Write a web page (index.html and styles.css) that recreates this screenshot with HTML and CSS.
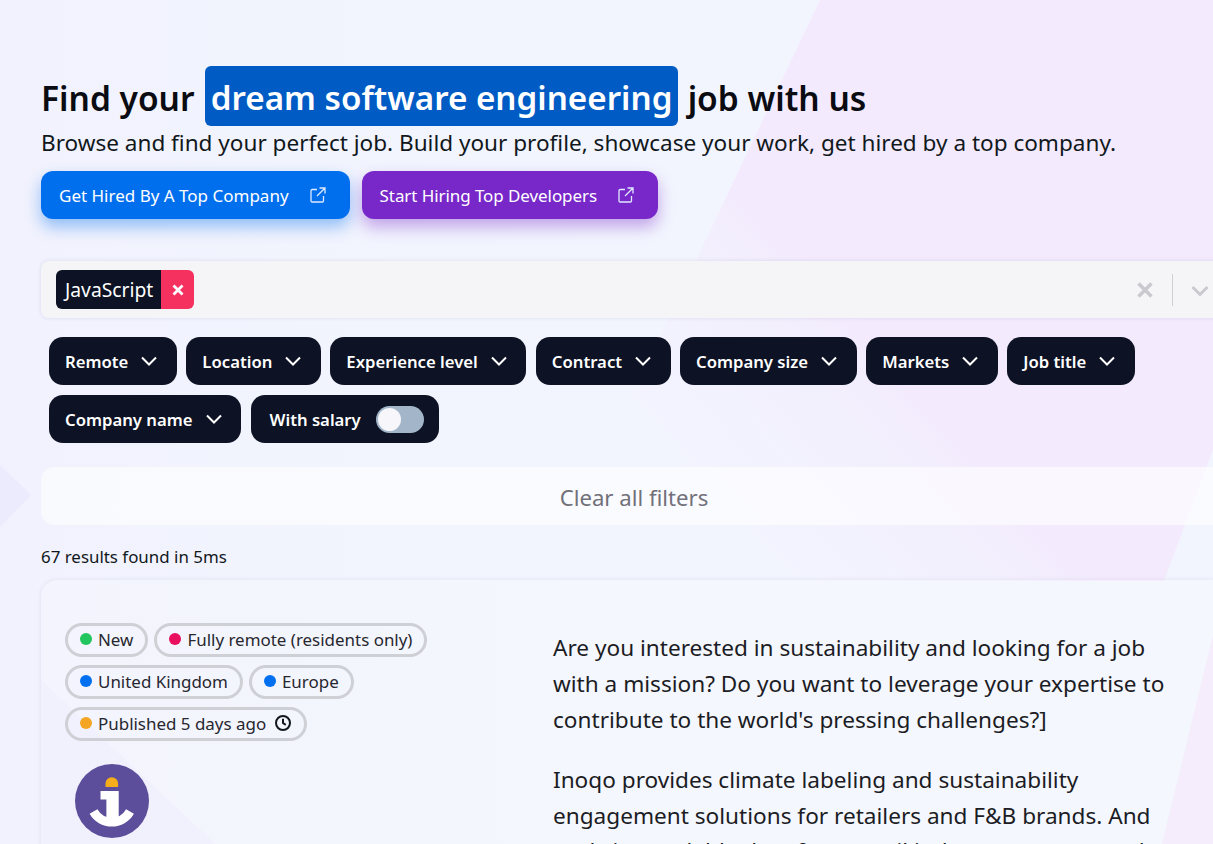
FILE: index.html
```html
<!DOCTYPE html>
<html lang="en">
<head>
    <meta charset="UTF-8">
    <meta name="viewport" content="width=device-width, initial-scale=1.0">
    <title>Find your dream software engineering job</title>
    <link rel="stylesheet" href="styles.css">
</head>
<body>

    <!-- faint shapes behind the page -->
    <svg class="backdrop" width="1213" height="844" viewBox="0 0 1213 844" aria-hidden="true">
        <defs>
            <linearGradient id="base" x1="0" y1="0" x2="1" y2="0">
                <stop offset="0" stop-color="#f1f2fd"/>
                <stop offset="0.5" stop-color="#f2f5fe"/>
                <stop offset="1" stop-color="#f2f5fe"/>
            </linearGradient>
            <linearGradient id="wash" gradientUnits="userSpaceOnUse" x1="650" y1="480" x2="850" y2="300">
                <stop offset="0" stop-color="#f3eafd" stop-opacity="0"/>
                <stop offset="0.75" stop-color="#f3eafd" stop-opacity="0.55"/>
                <stop offset="1" stop-color="#f3eafd"/>
            </linearGradient>
        </defs>
        <rect width="1213" height="844" fill="url(#base)"/>
        <polygon points="820,0 1213,0 1213,450 1164,581 560,581 620,420" fill="url(#wash)"/>
        <polygon points="0,465 31,495 0,527" fill="#ecebfd"/>
        <polygon points="41,680 215,844 41,844" fill="#eeedfd"/>
        <polygon points="1213,635 1162,844 1213,844" fill="#f3e9fc"/>
    </svg>

    <div class="container">
        <h1>Find your <span class="highlight">dream software engineering</span> job with us</h1>
        <p class="lead">Browse and find your perfect job. Build your profile, showcase your work, get hired by a top company.</p>

        <div class="cta-row">
            <a class="cta cta-blue" href="#">Get Hired By A Top Company
                <svg class="ext" width="18" height="18" viewBox="0 0 18 18"><path d="M8 3.500H3.200A1.200 1.200 0 0 0 2 4.700v10.100A1.200 1.200 0 0 0 3.200 16h10.100a1.200 1.200 0 0 0 1.200-1.200V10M10.500 2H16v5.500M16 2L8 10"/></svg>
            </a>
            <a class="cta cta-purple" href="#">Start Hiring Top Developers
                <svg class="ext" width="18" height="18" viewBox="0 0 18 18"><path d="M8 3.500H3.200A1.200 1.200 0 0 0 2 4.700v10.100A1.200 1.200 0 0 0 3.200 16h10.100a1.200 1.200 0 0 0 1.200-1.200V10M10.500 2H16v5.500M16 2L8 10"/></svg>
            </a>
        </div>

        <div class="search-bar">
            <div class="pill">
                <span class="pill-label">JavaScript</span>
                <span class="pill-remove"><svg width="12" height="12" viewBox="0 0 12 12"><path d="M1.500 1.500l9 9M10.500 1.500l-9 9"/></svg></span>
            </div>
            <div class="search-controls">
                <svg class="clear-x" width="20" height="20" viewBox="0 0 20 20"><path d="M3.500 3.500l13 13M16.500 3.500l-13 13"/></svg>
                <span class="divider"></span>
                <svg class="bar-chevron" width="20" height="20" viewBox="0 0 20 20"><path d="M2.500 7l7.500 7.500L17.500 7"/></svg>
            </div>
        </div>

        <div class="filters">
            <button class="filter">Remote <svg class="chev" width="18" height="18" viewBox="0 0 18 18"><path d="M2 5.500l7 7 7-7"/></svg></button>
            <button class="filter">Location <svg class="chev" width="18" height="18" viewBox="0 0 18 18"><path d="M2 5.500l7 7 7-7"/></svg></button>
            <button class="filter">Experience level <svg class="chev" width="18" height="18" viewBox="0 0 18 18"><path d="M2 5.500l7 7 7-7"/></svg></button>
            <button class="filter">Contract <svg class="chev" width="18" height="18" viewBox="0 0 18 18"><path d="M2 5.500l7 7 7-7"/></svg></button>
            <button class="filter">Company size <svg class="chev" width="18" height="18" viewBox="0 0 18 18"><path d="M2 5.500l7 7 7-7"/></svg></button>
            <button class="filter">Markets <svg class="chev" width="18" height="18" viewBox="0 0 18 18"><path d="M2 5.500l7 7 7-7"/></svg></button>
            <button class="filter">Job title <svg class="chev" width="18" height="18" viewBox="0 0 18 18"><path d="M2 5.500l7 7 7-7"/></svg></button>
            <button class="filter">Company name <svg class="chev" width="18" height="18" viewBox="0 0 18 18"><path d="M2 5.500l7 7 7-7"/></svg></button>
            <button class="filter filter-salary">With salary <span class="toggle"><span class="knob"></span></span></button>
        </div>

        <button class="clear-all">Clear all filters</button>

        <p class="count">67 results found in 5ms</p>

        <div class="job-card">
            <div class="job-side">
                <div class="tags">
                    <span class="tag"><i class="dot dot-green"></i>New</span>
                    <span class="tag"><i class="dot dot-pink"></i>Fully remote (residents only)</span>
                    <span class="tag"><i class="dot dot-blue"></i>United Kingdom</span>
                    <span class="tag"><i class="dot dot-blue"></i>Europe</span>
                    <span class="tag"><i class="dot dot-orange"></i>Published 5 days ago
                        <svg class="clock" width="18" height="18" viewBox="0 0 18 18"><circle cx="9" cy="9" r="7"/><path d="M9 4.800V9l2.800 1.800"/></svg>
                    </span>
                </div>
                <svg class="logo" width="74" height="74" viewBox="0 0 74 74">
                    <circle cx="37" cy="37" r="37" fill="#5c4e9b"/>
                    <path d="M30.500 23v-3.500a6.300 6.300 0 0 1 12.600 0v3.500z" fill="#f6ad1b"/>
                    <path d="M25.500 27H43.700V54H31.400V35.500H25.500z" fill="#fff"/>
                    <path d="M18.500 47.500A21 21 0 0 0 55 47.500" fill="none" stroke="#fff" stroke-width="9"/>
                </svg>
            </div>
            <div class="job-text">
                <p>Are you interested in sustainability and looking for a job with a mission? Do you want to leverage your expertise to contribute to the world's pressing challenges?]</p>
                <p>Inoqo provides climate labeling and sustainability engagement solutions for retailers and F&amp;B brands. And we bring scalable data from retail industry partners and</p>
            </div>
        </div>
    </div>

</body>
</html>
```

FILE: styles.css
```css
html, body {
    height: 844px;
    overflow: hidden;
}

body {
    margin: 0;
    background-color: #f2f4fe;
    color: #11181c;
    font-family: "Noto Sans", sans-serif;
}

.backdrop {
    position: absolute;
    top: 0;
    left: 0;
    z-index: -1;
}

.container {
    width: 1186px;
    margin-left: 41px;
    padding-top: 66px;
}

h1 {
    height: 60px;
    margin: 0;
    font-size: 33.500px;
    font-weight: 600;
    line-height: 64px;
    color: #0b0b12;
}

.highlight {
    display: inline-block;
    height: 60px;
    padding: 0 5.500px;
    margin: 0 1px 0 2px;
    background-color: #005bc4;
    color: #fff;
    border-radius: 6px;
    font-size: 33.200px;
    vertical-align: top;
}

.lead {
    margin: 0;
    font-size: 22.560px;
    line-height: 34px;
}

.cta-row {
    display: flex;
    gap: 12px;
    margin-top: 11px;
}

.cta {
    display: flex;
    align-items: center;
    gap: 20px;
    height: 48px;
    padding: 0 23px 0 18px;
    border-radius: 12px;
    color: #fff;
    font-size: 17px;
    text-decoration: none;
}

.cta-blue {
    background-color: #006fee;
    box-shadow: 0 8px 16px rgba(0, 111, 238, 0.4);
}

.cta-purple {
    background-color: #7828c8;
    box-shadow: 0 8px 16px rgba(120, 40, 200, 0.4);
    letter-spacing: -0.08px;
}

.ext {
    fill: none;
    stroke: #dfe9ff;
    stroke-width: 1.300;
}

.search-bar {
    display: flex;
    align-items: center;
    justify-content: space-between;
    height: 57px;
    margin-top: 42px;
    padding: 0 8px 0 15px;
    box-sizing: border-box;
    background-color: #f5f5f8;
    border-radius: 8px;
    box-shadow: 0 0 4px rgba(60, 60, 120, 0.12);
}

.pill {
    display: flex;
    height: 39px;
    font-size: 19.300px;
    border-radius: 6px;
    overflow: hidden;
}

.pill-label {
    display: flex;
    align-items: center;
    width: 96px;
    padding-left: 9px;
    background-color: #0d1224;
    color: #fff;
}

.pill-remove {
    display: flex;
    align-items: center;
    justify-content: center;
    width: 33px;
    background-color: #f5325f;
}

.pill-remove path {
    fill: none;
    stroke: #fff;
    stroke-width: 2.800;
}

.search-controls {
    display: flex;
    align-items: center;
    margin-right: 9px;
}

.clear-x path {
    fill: none;
    stroke: #c9c9cf;
    stroke-width: 3.500;
}

.divider {
    width: 1px;
    height: 32px;
    margin: 0 17px;
    background-color: #cfcfd4;
}

.bar-chevron path {
    fill: none;
    stroke: #c9c9cf;
    stroke-width: 3;
}

.filters {
    display: flex;
    flex-wrap: wrap;
    gap: 10px 9.500px;
    margin-top: 19px;
    padding-left: 8px;
}

.filter {
    display: flex;
    align-items: center;
    gap: 12px;
    height: 48px;
    padding: 0 18.500px 0 16px;
    border: none;
    border-radius: 14px;
    background-color: #0d1224;
    color: #fff;
    font-family: inherit;
    font-size: 16.700px;
    font-weight: 600;
}

.chev {
    fill: none;
    stroke: #fff;
    stroke-width: 2;
}

.filter-salary {
    gap: 15px;
    padding: 0 15px 0 19px;
}

.toggle {
    display: block;
    width: 48px;
    height: 27px;
    padding: 2px;
    box-sizing: border-box;
    border-radius: 14px;
    background-color: #a3b6c9;
}

.knob {
    display: block;
    width: 23px;
    height: 23px;
    border-radius: 50%;
    background-color: #f6f6fb;
}

.clear-all {
    display: block;
    width: 100%;
    height: 58px;
    margin-top: 24px;
    padding-top: 3px;
    border: none;
    border-radius: 14px;
    background-color: rgba(255, 255, 255, 0.6);
    color: #71717a;
    font-family: inherit;
    font-size: 22.200px;
}

.count {
    margin: 20px 0 0;
    font-size: 16.900px;
    line-height: 24px;
}

.job-card {
    display: grid;
    grid-template-columns: 488px 1fr;
    height: 400px;
    margin-top: 11px;
    padding: 43px 24px 0;
    background-color: rgba(255, 255, 255, 0.2);
    border-radius: 16px;
    box-shadow: 0 0 4px rgba(60, 60, 120, 0.1);
}

.tags {
    display: flex;
    flex-wrap: wrap;
    gap: 8px 6px;
    width: 400px;
}

.tag {
    display: flex;
    align-items: center;
    height: 34px;
    padding: 0 12px 2px;
    box-sizing: border-box;
    border: 3px solid #cfcfd6;
    border-radius: 17px;
    font-size: 16.950px;
    color: #27272f;
}

.dot {
    width: 12px;
    height: 12px;
    margin-right: 6px;
    border-radius: 50%;
}

.dot-green { background-color: #22c55e; }
.dot-pink { background-color: #e9115f; }
.dot-blue { background-color: #0070f0; }
.dot-orange { background-color: #f5a524; }

.clock {
    margin-left: 8px;
    fill: none;
    stroke: #11181c;
    stroke-width: 2;
}

.logo {
    display: block;
    margin: 23px 0 0 10px;
}

.job-text {
    width: 625px;
    font-size: 22.600px;
    line-height: 36px;
    color: #1c1c24;
}

.job-text p {
    margin: 0 0 24px;
}

.job-text p:first-child {
    margin-top: 7px;
}

.job-text p:last-child {
    line-height: 35.500px;
}
```
